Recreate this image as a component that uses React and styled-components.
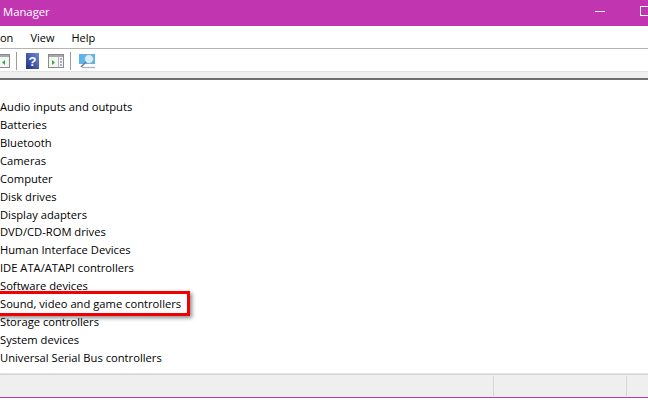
import React from 'react';
import styled, { createGlobalStyle } from 'styled-components';

const Global = createGlobalStyle`
  html, body {
    margin: 0;
    padding: 0;
    background: #ffffff;
  }
`;

const Window = styled.div`
  position: relative;
  width: 648px;
  height: 400px;
  box-sizing: border-box;
  padding-bottom: 2px;
  overflow: hidden;
  display: flex;
  flex-direction: column;
  font-family: "Open Sans", "Noto Sans", sans-serif;
  color: #000;
`;

const TitleBar = styled.div`
  height: 26px;
  flex: none;
  box-sizing: border-box;
  padding: 0 0 4px 3px;
  background: #c136b0;
  color: #fff;
  display: flex;
  align-items: center;
  justify-content: space-between;
  font-size: 11.3px;
`;

const WindowButtons = styled.div`
  display: flex;
  align-items: center;
  gap: 35px;
  margin-right: -2px;
`;

const MinButton = styled.div`
  width: 10px;
  height: 1px;
  background: #fff;
`;

const MaxButton = styled.div`
  width: 10px;
  height: 10px;
  box-sizing: border-box;
  border: 1px solid #fff;
`;

const MenuBar = styled.div`
  height: 22px;
  flex: none;
  display: flex;
  align-items: center;
  gap: 17px;
  font-size: 11px;
  border-bottom: 1px solid #b4b4b4;
`;

const Toolbar = styled.div`
  height: 22px;
  flex: none;
  box-sizing: border-box;
  padding-top: 2px;
  display: flex;
  align-items: center;
  margin-left: -6px;
`;

const ToolIcon = styled.svg`
  width: 16px;
  height: 16px;
  flex: none;
  margin-left: ${p => p.$left || 0}px;
`;

const Separator = styled.div`
  width: 1px;
  height: 18px;
  flex: none;
  background: #9c9c9c;
  margin-left: ${p => p.$left}px;
`;

const Strip = styled.div`
  height: 7px;
  flex: none;
  background: #f0f0f0;
  border-top: 1px solid #e2e2e2;
  box-sizing: border-box;
`;

const Rule = styled.div`
  height: 2px;
  flex: none;
  background: #6e6e6e;
`;

const Tree = styled.ul`
  flex: 1;
  list-style: none;
  margin: 0;
  padding: 18px 0 0;
  font-size: 11.2px;
`;

const Row = styled.li`
  height: 17.93px;
  line-height: 17.93px;
  white-space: nowrap;
`;

const Highlight = styled.span`
  position: absolute;
  left: -6px;
  top: 291px;
  width: 196px;
  height: 25px;
  box-sizing: border-box;
  border: 3px solid #f00000;
  box-shadow: 2px 2px 4px rgba(0, 0, 0, 0.45);
`;

const StatusBar = styled.div`
  height: 23px;
  flex: none;
  box-sizing: border-box;
  background: #efefef;
  border-top: 1px solid #d6d6d6;
  box-shadow: 0 -1px 0 #e4e4e4;
  display: flex;
  justify-content: flex-end;
  align-items: center;
  padding-right: 21px;
  gap: 132px;
`;

const StatusGrip = styled.div`
  width: 1px;
  height: 20px;
  background: #d4d4d4;
`;

const BottomEdge = styled.div`
  height: 1px;
  flex: none;
  background: #c136b0;
`;

const devices = [
  'Audio inputs and outputs',
  'Batteries',
  'Bluetooth',
  'Cameras',
  'Computer',
  'Disk drives',
  'Display adapters',
  'DVD/CD-ROM drives',
  'Human Interface Devices',
  'IDE ATA/ATAPI controllers',
  'Software devices',
  'Sound, video and game controllers',
  'Storage controllers',
  'System devices',
  'Universal Serial Bus controllers',
];

function BackIcon() {
  return (
    <ToolIcon viewBox="0 0 16 16">
      <rect x="0.5" y="1.5" width="15" height="13" fill="#f4f4f4" stroke="#8a8a8a" />
      <rect x="1" y="2" width="14" height="2" fill="#a8a8a8" />
      <path d="M11 7v5L8 9.5z" fill="#2fae3a" />
      <path d="M2 6h3M2 9h3M2 12h3" stroke="#4a6fa8" />
    </ToolIcon>
  );
}

function ForwardIcon({ left }) {
  return (
    <ToolIcon $left={left} viewBox="0 0 16 16">
      <rect x="0.5" y="1.5" width="15" height="13" fill="#f4f4f4" stroke="#8a8a8a" />
      <rect x="1" y="2" width="14" height="2" fill="#a8a8a8" />
      <path d="M10.5 4v10" stroke="#b0b0b0" />
      <path d="M4 7v5l3-2.5z" fill="#2fae3a" />
      <path d="M12 6h2M12 9h2M12 12h2" stroke="#4a6fa8" />
    </ToolIcon>
  );
}

function HelpIcon({ left }) {
  return (
    <ToolIcon $left={left} viewBox="0 0 16 16">
      <defs>
        <linearGradient id="helpFill" x1="0" y1="1" x2="1" y2="0">
          <stop offset="0" stopColor="#1f2f7c" />
          <stop offset="1" stopColor="#6d8ae0" />
        </linearGradient>
      </defs>
      <rect x="1" y="0" width="13" height="16" fill="url(#helpFill)" />
      <text x="7.5" y="12.5" textAnchor="middle" fontSize="13" fontWeight="700" fontFamily="Liberation Sans" fill="#fff">?</text>
    </ToolIcon>
  );
}

function ScanIcon({ left }) {
  return (
    <ToolIcon $left={left} viewBox="0 0 16 16">
      <rect x="0" y="1" width="16" height="10" fill="#5ab4ee" />
      <circle cx="10" cy="6" r="4.5" fill="#d6eefc" stroke="#8fb0c4" />
      <path d="M7 9l-5 5" stroke="#6f7d88" strokeWidth="1.4" />
      <path d="M3 14.5h13" stroke="#a6b0b6" strokeWidth="1.2" />
    </ToolIcon>
  );
}

export default function App() {
  return (
    <Window>
      <Global />
      <TitleBar>
        Manager
        <WindowButtons>
          <MinButton />
          <MaxButton />
        </WindowButtons>
      </TitleBar>
      <MenuBar>
        <span>on</span>
        <span>View</span>
        <span>Help</span>
      </MenuBar>
      <Toolbar>
        <BackIcon />
        <Separator $left={6} />
        <HelpIcon left={8} />
        <ForwardIcon left={7} />
        <Separator $left={6} />
        <ScanIcon left={8} />
      </Toolbar>
      <Strip />
      <Rule />
      <Tree>
        {devices.map(name => (
          <Row key={name}>{name}</Row>
        ))}
      </Tree>
      <Highlight />
      <StatusBar>
        <StatusGrip />
        <StatusGrip />
      </StatusBar>
      <BottomEdge />
    </Window>
  );
}
